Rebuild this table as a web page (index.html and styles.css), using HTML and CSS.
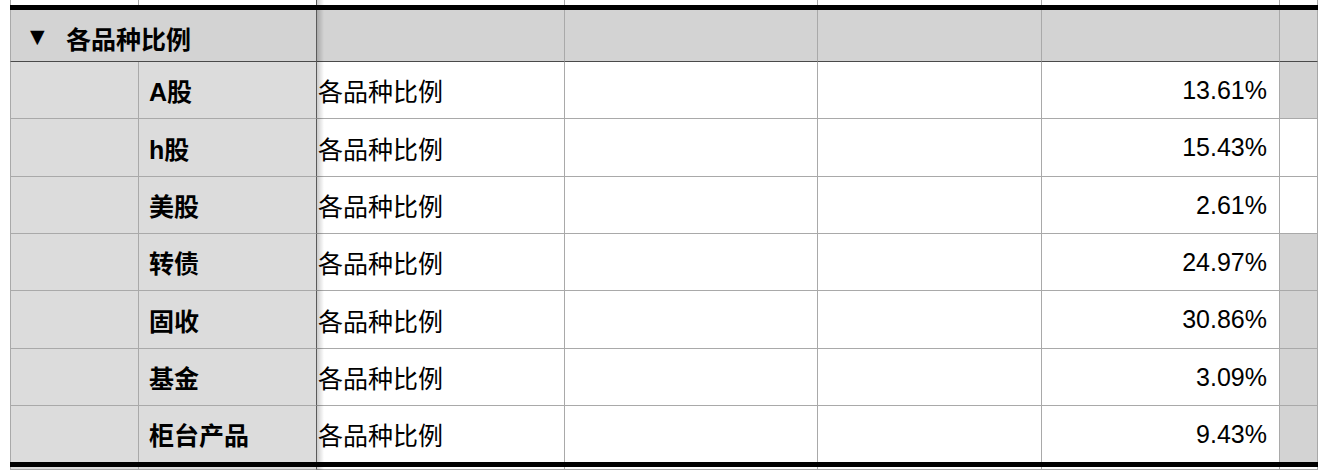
FILE: index.html
```html
<!DOCTYPE html>
<html lang="zh">
<head>
<meta charset="utf-8">
<title>各品种比例</title>
<link rel="stylesheet" href="styles.css">
</head>
<body>
<div class="sheet">
  <!-- partial row above -->
  <div class="c top c1"></div><div class="c top c2"></div><div class="c top"></div><div class="c top"></div><div class="c top"></div><div class="c top"></div><div class="c top"></div>
  <div class="bar"></div>

  <!-- group header -->
  <div class="c head group"><span class="tri">▼</span><span>各品种比例</span></div>
  <div class="c head"></div><div class="c head"></div><div class="c head"></div><div class="c head"></div><div class="c head"></div>

  <div class="c c1 side"></div><div class="c c2 side label">A股</div><div class="c name">各品种比例</div><div class="c"></div><div class="c"></div><div class="c pct">13.61%</div><div class="c grey"></div>
  <div class="c c1 side"></div><div class="c c2 side label">h股</div><div class="c name">各品种比例</div><div class="c"></div><div class="c"></div><div class="c pct">15.43%</div><div class="c"></div>
  <div class="c c1 side"></div><div class="c c2 side label">美股</div><div class="c name">各品种比例</div><div class="c"></div><div class="c"></div><div class="c pct">2.61%</div><div class="c"></div>
  <div class="c c1 side"></div><div class="c c2 side label">转债</div><div class="c name">各品种比例</div><div class="c"></div><div class="c"></div><div class="c pct">24.97%</div><div class="c grey"></div>
  <div class="c c1 side"></div><div class="c c2 side label">固收</div><div class="c name">各品种比例</div><div class="c"></div><div class="c"></div><div class="c pct">30.86%</div><div class="c grey"></div>
  <div class="c c1 side"></div><div class="c c2 side label">基金</div><div class="c name">各品种比例</div><div class="c"></div><div class="c"></div><div class="c pct">3.09%</div><div class="c grey"></div>
  <div class="c c1 side last"></div><div class="c c2 side label last">柜台产品</div><div class="c name last">各品种比例</div><div class="c last"></div><div class="c last"></div><div class="c pct last">9.43%</div><div class="c grey last"></div>

  <div class="bar"></div>

  <!-- partial row below -->
  <div class="c c1 side"></div><div class="c c2 side"></div><div class="c"></div><div class="c"></div><div class="c"></div><div class="c"></div><div class="c"></div>

  <div class="freeze-shadow"></div>
</div>
</body>
</html>
```

FILE: styles.css
```css
* { box-sizing: border-box; }

html, body {
  margin: 0;
  padding: 0;
  background: #ffffff;
}

body {
  width: 1318px;
  height: 470px;
  overflow: hidden;
  font-family: "Liberation Sans", "Noto Sans CJK SC", sans-serif;
  font-size: 25px;
  color: #000;
}

.sheet {
  position: relative;
  display: grid;
  padding-left: 10px;
  grid-template-columns: 129px 178px 248px 253px 224px 238px 1fr;
  grid-template-rows: 5px 5px 52px 57px 58px 57px 57px 58px 57px 56px 5px 3px;
  height: 470px;
  overflow: hidden;
}

.c {
  border-right: 1px solid #a9a9a9;
  border-bottom: 1px solid #a9a9a9;
  background: #ffffff;
  display: flex;
  align-items: center;
  white-space: nowrap;
  overflow: hidden;
}

.c1 { border-left: 1px solid #a9a9a9; }
.c2 { border-right-color: #5a5a5a; }

.top { border-bottom: none; }
.last { border-bottom: none; }

.bar {
  grid-column: 1 / -1;
  background: #000;
}

.head {
  background: #d3d3d3;
  border-bottom-color: #4a4a4a;
}

.group {
  grid-column: 1 / 3;
  border-left: 1px solid #a9a9a9;
  border-right-color: #5a5a5a;
  font-weight: bold;
  padding-left: 19px;
  padding-top: 4px;
}

.tri {
  font-size: 19px;
  width: 36px;
  margin-top: -4px;
  font-family: "DejaVu Sans", sans-serif;
}

.side { background: #dcdcdc; }

.label {
  font-weight: bold;
  padding-left: 10px;
}

.name { padding-left: 1px; }

.pct {
  justify-content: flex-end;
  padding-right: 12px;
}

.grey { background: #d3d3d3; }

.freeze-shadow {
  position: absolute;
  left: 317px;
  top: 0;
  width: 7px;
  height: 470px;
  background: linear-gradient(to right, rgba(0,0,0,0.2), rgba(0,0,0,0));
  pointer-events: none;
}
```
